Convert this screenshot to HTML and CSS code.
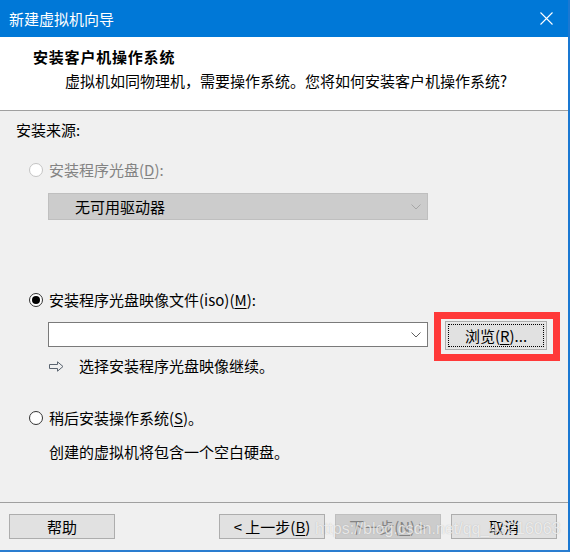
FILE: index.html
```html
<!DOCTYPE html>
<html lang="zh-CN">
<head>
<meta charset="utf-8">
<title>新建虚拟机向导</title>
<link rel="stylesheet" href="styles.css">
</head>
<body>
<div class="window">
  <div class="titlebar">
    <span class="title">新建虚拟机向导</span>
    <svg class="close" viewBox="0 0 13 13" width="13" height="13"><path d="M0.5 0.5 L12.5 12.5 M12.5 0.5 L0.5 12.5" stroke="#fff" stroke-width="1.1" fill="none"/></svg>
  </div>
  <div class="header">
    <div class="h-title">安装客户机操作系统</div>
    <div class="h-sub">虚拟机如同物理机，需要操作系统。您将如何安装客户机操作系统?</div>
  </div>
  <div class="content">
    <div class="source">安装来源:</div>
    <div class="radio-row row1 disabled"><span class="radio"></span><span>安装程序光盘(<u>D</u>):</span></div>
    <div class="combo combo-disabled">
      <span class="combo-text">无可用驱动器</span>
      <svg class="chev" viewBox="0 0 10 6" width="10" height="6"><path d="M0.5 0.5 L5 5 L9.5 0.5" stroke="#a6a6a6" stroke-width="1" fill="none"/></svg>
    </div>
    <div class="radio-row row2"><span class="radio checked"></span><span>安装程序光盘映像文件(iso)(<u>M</u>):</span></div>
    <div class="iso-row">
      <div class="combo combo-iso">
        <span class="combo-text"></span>
        <svg class="chev" viewBox="0 0 10 6" width="10" height="6"><path d="M0.5 0.5 L5 5 L9.5 0.5" stroke="#606060" stroke-width="1" fill="none"/></svg>
      </div>
      <div class="highlight">
        <button class="btn btn-browse">浏览(<u>R</u>)...</button>
      </div>
    </div>
    <div class="hint">
      <svg class="arrow" viewBox="0 0 15 11" width="15" height="11"><path d="M0.5 3.5 H8.5 V0.8 L14 5.5 L8.5 10.2 V7.5 H0.5 Z" stroke="#5a6470" stroke-width="1" fill="none" stroke-linejoin="miter"/></svg>
      <span>选择安装程序光盘映像继续。</span>
    </div>
    <div class="radio-row row3"><span class="radio"></span><span>稍后安装操作系统(<u>S</u>)。</span></div>
    <div class="desc">创建的虚拟机将包含一个空白硬盘。</div>
  </div>
  <div class="footer">
    <button class="btn">帮助</button>
    <div class="spacer"></div>
    <button class="btn">&lt; 上一步(<u>B</u>)</button>
    <button class="btn btn-disabled">下一步(<u>N</u>) &gt;</button>
    <button class="btn">取消</button>
  </div>
  <div class="watermark">https://blog.csdn.net/qq_43216063</div>
</div>
</body>
</html>
```
FILE: styles.css
```css
* { box-sizing: border-box; }
body {
  margin: 0;
  font-family: "Noto Sans CJK SC", sans-serif;
  font-size: 15px;
  color: #000;
  background: #fff;
}
u { text-underline-offset: 2px; text-decoration-thickness: 1px; }
.window {
  position: relative;
  width: 570px;
  height: 552px;
  border-right: 2px solid #1a78d2;
  border-bottom: 2px solid #2a7dd0;
  background: #f0f0f0;
  display: flex;
  flex-direction: column;
  overflow: hidden;
}
.titlebar {
  flex: none;
  height: 37px;
  background: #0078d7;
  color: #fff;
  display: flex;
  align-items: center;
  padding-left: 9px;
}
.title { flex: 1; line-height: 20px; }
.close { margin-right: 15px; display: block; }
.header {
  flex: none;
  height: 74px;
  background: #fff;
  border-bottom: 1px solid #a0a0a0;
  padding: 10px 0 0 33px;
}
.h-title {
  font-weight: 700;
  line-height: 20px;
  letter-spacing: 0.8px;
}
.h-sub {
  line-height: 20px;
  margin-top: 4px;
  padding-left: 32px;
}
.content {
  flex: 1;
  padding-left: 16px;
  display: flex;
  flex-direction: column;
  align-items: flex-start;
}
.source { line-height: 20px; margin-top: 9px; }
.radio-row {
  display: flex;
  align-items: center;
  height: 20px;
  line-height: 20px;
  padding-left: 13px;
  gap: 6px;
}
.row1 { margin-top: 20px; }
.row2 { margin-top: 70px; }
.row3 { margin-top: 32px; }
.disabled { color: #838383; }
.radio {
  width: 14px;
  height: 14px;
  border-radius: 50%;
  border: 1px solid #333;
  background: #fff;
  display: flex;
  align-items: center;
  justify-content: center;
  flex: none;
}
.disabled .radio { border-color: #c4c4c4; }
.radio.checked::after {
  content: "";
  width: 8px;
  height: 8px;
  border-radius: 50%;
  background: #000;
}
.combo {
  width: 380px;
  margin-left: 32px;
  display: flex;
  align-items: center;
  padding: 0 6px 0 26px;
}
.combo-text { flex: 1; line-height: 20px; }
.chev { display: block; flex: none; }
.combo-disabled {
  margin-top: 13px;
  height: 27px;
  background: #cccccc;
  border: 1px solid #bfbfbf;
}
.iso-row {
  margin-top: 12px;
  display: flex;
  align-items: flex-start;
  height: 25px;
}
.combo-iso {
  height: 25px;
  background: #fff;
  border: 1px solid #7a7a7a;
}
.highlight {
  margin: -10px 0 0 6px;
  border: 7px solid #ff3939;
  padding: 2px 6px 4px 4px;
  background: #f0f0f0;
}
.btn {
  font: inherit;
  color: #000;
  width: 106px;
  height: 25px;
  line-height: 20px;
  padding: 0;
  border: 1px solid #adadad;
  background: #e1e1e1;
  display: flex;
  align-items: center;
  justify-content: center;
}
.btn-browse {
  width: 102px;
  height: 29px;
  box-shadow: inset 0 0 0 1px #e8e8e8;
  outline: 1px dotted #000;
  outline-offset: -4px;
}
.btn-disabled {
  background: #cccccc;
  border-color: #bfbfbf;
  color: #838383;
}
.hint {
  margin-top: 9px;
  margin-left: 33px;
  display: flex;
  align-items: center;
  height: 20px;
  line-height: 20px;
  gap: 15px;
}
.arrow { display: block; }
.desc { margin-top: 14px; margin-left: 33px; line-height: 20px; }
.footer {
  flex: none;
  height: 48px;
  border-top: 1px solid #a0a0a0;
  padding: 11px 11px 0 9px;
  display: flex;
  align-items: flex-start;
  gap: 10px;
}
.spacer { flex: 1; }
.watermark {
  position: absolute;
  left: 315px;
  top: 519px;
  font-family: "Liberation Sans", Arial, sans-serif;
  font-size: 16px;
  line-height: 20px;
  color: rgba(255, 255, 255, 0.72);
  text-shadow: 0 0 1px rgba(90, 90, 90, 0.35);
  white-space: nowrap;
}
```
